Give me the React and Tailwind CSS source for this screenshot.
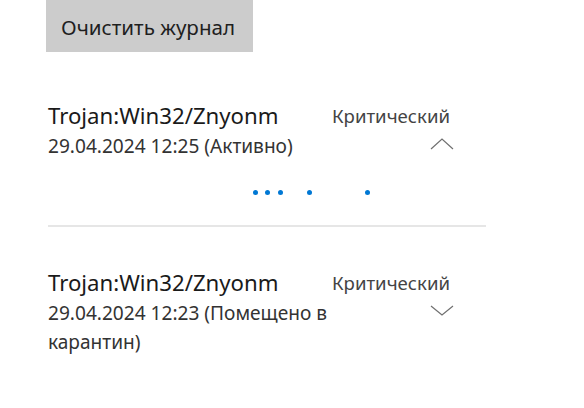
import React from "react";

const threats = [
  {
    name: "Trojan:Win32/Znyonm",
    date: "29.04.2024 12:25 (Активно)",
    level: "Критический",
    open: true,
  },
  {
    name: "Trojan:Win32/Znyonm",
    date: "29.04.2024 12:23 (Помещено в карантин)",
    level: "Критический",
    open: false,
  },
];

const Chevron = ({ up }) => (
  <svg width="24" height="12" viewBox="0 0 24 12" fill="none" className="text-[#707070]">
    {up ? (
      <path d="M1 11 L12 1 L23 11" stroke="currentColor" strokeWidth="1.2" />
    ) : (
      <path d="M1 1 L12 10 L23 1" stroke="currentColor" strokeWidth="1.2" />
    )}
  </svg>
);

// progress dots, x positions taken from the page
const Dots = () => (
  <div className="relative h-[5px] w-full">
    {[255, 267, 280, 309, 367].map((x) => (
      <span
        key={x}
        className="absolute top-0 w-[5px] h-[5px] rounded-full bg-[#0078d4]"
        style={{ left: x - 2 - 48 }}
      />
    ))}
  </div>
);

const ThreatItem = ({ item }) => (
  <div className="flex w-[438px]">
    <div className="w-[284px] shrink-0">
      <p className="text-[22.2px] leading-[32px] text-[#1a1a1a]">{item.name}</p>
      <p className="text-[19.1px] leading-[29px] text-[#333]">{item.date}</p>
    </div>
    <div className="w-[130px] flex flex-col items-start">
      <p className="text-[18.6px] leading-[32px] text-[#444] whitespace-nowrap">{item.level}</p>
      <div className="ml-[98px] mt-[6px]">
        <Chevron up={item.open} />
      </div>
    </div>
  </div>
);

export default function App() {
  return (
    <div className="w-[584px] h-[408px] bg-white font-['Segoe_UI','Noto_Sans',sans-serif] pl-[46px]">
      <button className="flex items-center w-[207px] h-[52px] bg-[#cccccc] text-[20.6px] text-[#1f1f1f] pl-[15px] pt-[3px]">
        Очистить журнал
      </button>

      <div className="pl-[2px] pt-[48px]">
        <ThreatItem item={threats[0]} />
        <div className="mt-[29px]">
          <Dots />
        </div>
        <div className="mt-[30px] h-[2px] w-[438px] bg-[#e6e6e6]" />
        <div className="pt-[40px]">
          <ThreatItem item={threats[1]} />
        </div>
      </div>
    </div>
  );
}
